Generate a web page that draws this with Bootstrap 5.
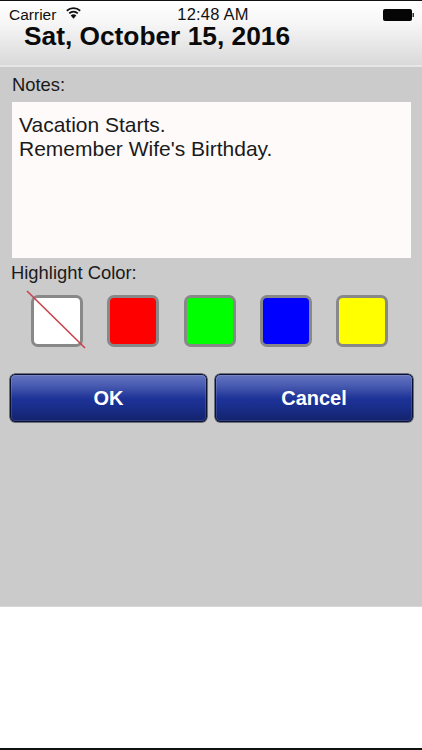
<!DOCTYPE html>
<html lang="en">
<head>
<meta charset="utf-8">
<title>Notes</title>
<link href="https://cdn.jsdelivr.net/npm/bootstrap@5.3.0/dist/css/bootstrap.min.css" rel="stylesheet">
<style>
html, body { height: 100%; }
body { margin: 0; background: #fff; font-family: "Liberation Sans", Arial, sans-serif; color: #111; overflow: hidden; }
.phone-frame { width: 422px; height: 750px; border-top: 1px solid #111; border-bottom: 2px solid #111; }
.top-head { height: 64px; background: linear-gradient(#ffffff 0%, #f6f6f6 35%, #d9d9d9 100%); border-bottom: 2px solid #e6e6e6; box-sizing: content-box; flex: none; }
.status-line { height: 25px; padding: 2px 8px 0 9px; font-size: 15.5px; line-height: 21px; }
.status-time { flex: 1; text-align: center; font-size: 16.5px; letter-spacing: .2px; padding-left: 3px; }
.status-carrier { width: 110px; gap: 9px; }
.status-carrier svg { margin-bottom: 3px; }
.status-batt { width: 110px; }
.date-title { font-size: 26.3px; font-weight: 700; line-height: 20px; margin: 0 0 0 24px; color: #0a0a0a; }
.panel-body { height: 540px; flex: none; background: #cbcbcb; border-bottom: 1px solid #d8d8d8; }
.field-label { line-height: 22px; color: #1a1a1a; font-size: 18.4px; }
.label-notes { margin: 7px 0 0 12px; }
.label-high { margin: 4px 0 0 11px; }
.notes-box.form-control { width: 399px; height: 156px; margin: 6px 0 0 12px; padding: 11px 7px; background: #fffafa; border: 0; border-radius: 0; font-size: 21px; line-height: 24px; color: #1a1a1a; font-family: inherit; }
.swatch-row { gap: 24.25px; margin: 11px 0 0 31px; }
.swatch-tile { width: 52px; height: 52px; border: 3px solid #888; border-radius: 7px; flex: none; padding: 0; }
.swatch-none { position: relative; background: #fff; }
.swatch-slash { position: absolute; left: -7px; top: -7px; width: 60px; height: 60px; overflow: visible; }
.action-row { gap: 8px; margin: 27px 0 0 10px; }
.action-btn.btn { width: 197px; height: 48px; padding: 0; border: 1px solid #0a1230; border-radius: 5px; color: #fff; font-size: 20px; font-weight: 700; background: linear-gradient(#6474c0 0%, #4a5cb2 22%, #1d3296 52%, #1a2f8f 65%, #14236c 100%); box-shadow: 0 0 0 .5px #0a1230, inset 0 0 0 1px rgba(255,255,255,.12); }
.action-btn.btn-wide { width: 198px; }
</style>
</head>
<body>
<div class="phone-frame d-flex flex-column">
  <header class="top-head">
    <div class="status-line d-flex align-items-center">
      <div class="status-carrier d-flex align-items-center">
        <span>Carrier</span>
        <svg width="17" height="12" viewBox="0 0 16 12" aria-hidden="true"><path d="M8 11.8 5.2 8.4a4.2 4.2 0 0 1 5.6 0z" fill="#111"/><path d="M3.7 6.4a6.5 6.5 0 0 1 8.6 0M1.3 3.7a10.2 10.2 0 0 1 13.4 0" fill="none" stroke="#111" stroke-width="1.8"/></svg>
      </div>
      <div class="status-time">12:48 AM</div>
      <div class="status-batt d-flex justify-content-end">
        <svg width="33" height="12" viewBox="0 0 33 12" aria-hidden="true"><rect x="2" y="0" width="29" height="12" rx="2" fill="#050505"/><rect x="31.5" y="4" width="1.5" height="4" fill="#333"/></svg>
      </div>
    </div>
    <h1 class="date-title">Sat, October 15, 2016</h1>
  </header>
  <main class="panel-body">
    <div class="field-label label-notes">Notes:</div>
    <div class="notes-box form-control">Vacation Starts.<br>Remember Wife's Birthday.</div>
    <div class="field-label label-high">Highlight Color:</div>
    <div class="swatch-row d-flex">
      <div class="swatch-tile swatch-none">
        <svg class="swatch-slash" viewBox="0 0 60 60" aria-hidden="true"><line x1="0" y1="0" x2="58" y2="57" stroke="#c8434b" stroke-width="1.6"/></svg>
      </div>
      <div class="swatch-tile" style="background:#f00"></div>
      <div class="swatch-tile" style="background:#0f0"></div>
      <div class="swatch-tile" style="background:#00f"></div>
      <div class="swatch-tile" style="background:#ff0"></div>
    </div>
    <div class="action-row d-flex">
      <button type="button" class="btn action-btn">OK</button>
      <button type="button" class="btn action-btn btn-wide">Cancel</button>
    </div>
  </main>
</div>
<script src="https://cdn.jsdelivr.net/npm/bootstrap@5.3.0/dist/js/bootstrap.bundle.min.js"></script>
</body>
</html>
